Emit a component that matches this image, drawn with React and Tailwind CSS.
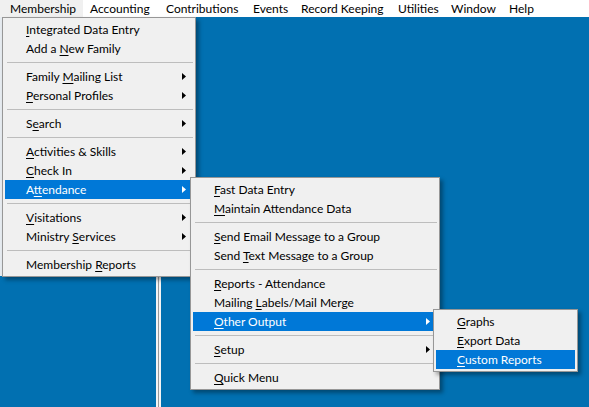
import React from 'react';

const barItems = [
  { label: 'Membership', w: 'w-[83px] pl-[10px] bg-[#f0f0f0]' },
  { label: 'Accounting', w: 'w-[76px] pl-[7px]' },
  { label: 'Contributions', w: 'w-[87px] pl-[7px]' },
  { label: 'Events', w: 'w-[48px] pl-[7px]' },
  { label: 'Record Keeping', w: 'w-[97px] pl-[7px]' },
  { label: 'Utilities', w: 'w-[53px] pl-[7px]' },
  { label: 'Window', w: 'w-[58px] pl-[7px]' },
  { label: 'Help', w: 'w-[40px] pl-[7px]' },
];

// [before, underlined, after, hasArrow, active]  — '-' is a separator
const membership = [
  ['', 'I', 'ntegrated Data Entry'],
  ['Add a ', 'N', 'ew Family'],
  '-',
  ['Family ', 'M', 'ailing List', true],
  ['', 'P', 'ersonal Profiles', true],
  '-',
  ['S', 'e', 'arch', true],
  '-',
  ['', 'A', 'ctivities & Skills', true],
  ['', 'C', 'heck In', true],
  ['A', 't', 'tendance', true, true],
  '-',
  ['', 'V', 'isitations', true],
  ['Ministry ', 'S', 'ervices', true],
  '-',
  ['Membership ', 'R', 'eports'],
];

const attendance = [
  ['', 'F', 'ast Data Entry'],
  ['', 'M', 'aintain Attendance Data'],
  '-',
  ['', 'S', 'end Email Message to a Group'],
  ['Send ', 'T', 'ext Message to a Group'],
  '-',
  ['', 'R', 'eports - Attendance'],
  ['Mailing ', 'L', 'abels/Mail Merge'],
  ['', 'O', 'ther Output', true, true],
  '-',
  ['', 'S', 'etup', true],
  '-',
  ['', 'Q', 'uick Menu'],
];

const otherOutput = [
  ['', 'G', 'raphs'],
  ['', 'E', 'xport Data'],
  ['', 'C', 'ustom Reports', false, true],
];

function Arrow({ active }) {
  return (
    <svg width="4" height="7" viewBox="0 0 4 7" className="ml-auto">
      <polygon points="0,0 4,3.5 0,7" fill={active ? '#ffffff' : '#000000'} />
    </svg>
  );
}

function Menu({ items, className }) {
  return (
    <div className={`absolute flex flex-col bg-[#f0f0f0] border border-[#979797] px-[2px] py-[2px] shadow-[3px_3px_4px_rgba(0,0,0,0.35)] ${className}`}>
      {items.map((it, i) =>
        it === '-' ? (
          <div key={i} className="h-[9px] flex items-center pl-[2px]">
            <div className="h-px w-full bg-[#bdbdbd]" />
          </div>
        ) : (
          <div
            key={i}
            className={`h-[19px] flex items-center pl-[21px] pr-[7px] whitespace-nowrap ${it[4] ? 'bg-[#0078d7] text-white' : 'text-black'}`}
          >
            <span className="pt-px">
              {it[0]}
              <u className="underline-offset-[2px]">{it[1]}</u>
              {it[2]}
            </span>
            {it[3] && <Arrow active={it[4]} />}
          </div>
        )
      )}
    </div>
  );
}

export default function App() {
  return (
    <div className="relative w-[589px] h-[407px] overflow-hidden bg-[#0170b1] font-['Lato','Noto_Sans',sans-serif] text-[12px] leading-none">
      <div className="h-[17px] bg-white flex items-center">
        {barItems.map((b) => (
          <div key={b.label} className={`h-full flex items-center whitespace-nowrap text-black ${b.w}`}>
            {b.label}
          </div>
        ))}
      </div>

      {/* window fragments behind the menus */}
      <div className="absolute left-0 top-[17px] w-[2px] h-[259px] bg-[#e6ebf0]" />
      <div className="absolute left-[156px] top-[17px] w-[5px] h-[390px] flex">
        <div className="w-[2px] bg-[#f4f4f4]" />
        <div className="w-px bg-[#9a9a9a]" />
        <div className="w-[2px] bg-[#f4f4f4]" />
      </div>

      <Menu items={membership} className="left-[2px] top-[17px] w-[194px]" />
      <Menu items={attendance} className="left-[190px] top-[177px] w-[250px]" />
      <Menu items={otherOutput} className="left-[433px] top-[309px] w-[145px]" />
    </div>
  );
}
